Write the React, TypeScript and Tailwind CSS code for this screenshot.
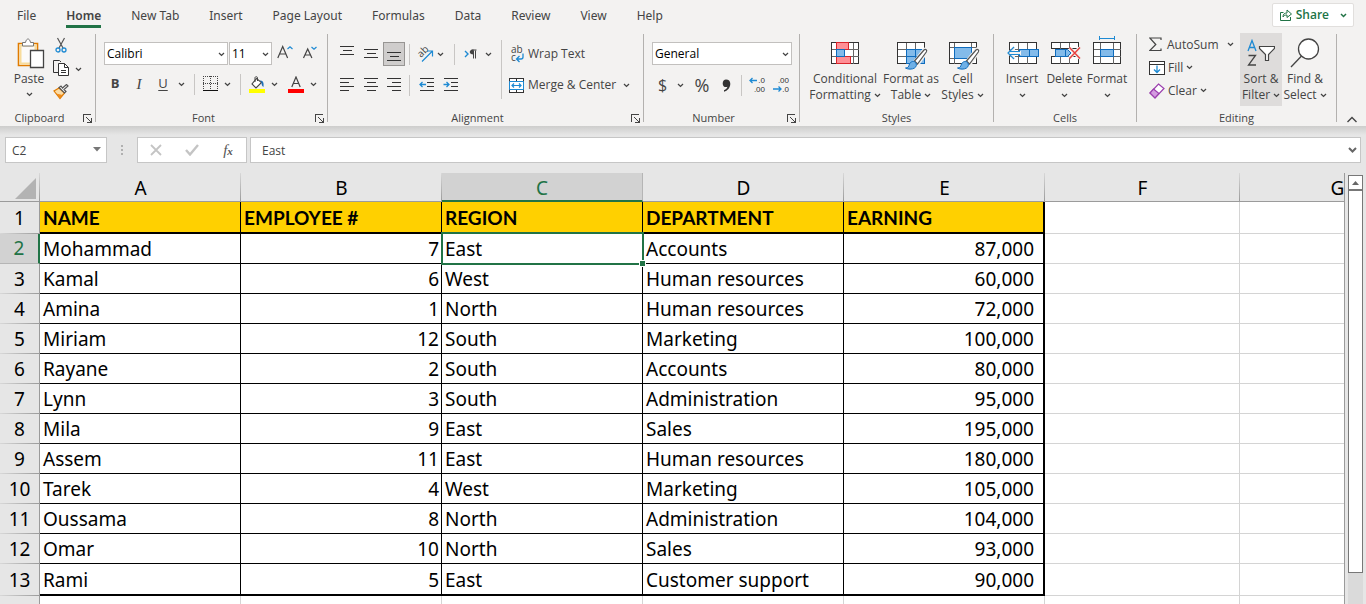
import React from "react";

const tabs = ["File", "Home", "New Tab", "Insert", "Page Layout", "Formulas", "Data", "Review", "View", "Help"];

type Row = [string, number, string, string, string];

const employees: Row[] = [
  ["Mohammad", 7, "East", "Accounts", "87,000"],
  ["Kamal", 6, "West", "Human resources", "60,000"],
  ["Amina", 1, "North", "Human resources", "72,000"],
  ["Miriam", 12, "South", "Marketing", "100,000"],
  ["Rayane", 2, "South", "Accounts", "80,000"],
  ["Lynn", 3, "South", "Administration", "95,000"],
  ["Mila", 9, "East", "Sales", "195,000"],
  ["Assem", 11, "East", "Human resources", "180,000"],
  ["Tarek", 4, "West", "Marketing", "105,000"],
  ["Oussama", 8, "North", "Administration", "104,000"],
  ["Omar", 10, "North", "Sales", "93,000"],
  ["Rami", 5, "East", "Customer support", "90,000"],
];

function Caret({ className = "" }: { className?: string }) {
  return (
    <svg width="7" height="5" viewBox="0 0 7 5" className={`shrink-0 ${className}`} fill="none" stroke="#444" strokeWidth="1.3" aria-hidden="true">
      <path d="M1 1l2.5 2.4L6 1" />
    </svg>
  );
}

function CaretButton({ label, className }: { label: string; className: string }) {
  return (
    <button type="button" aria-label={label} className={`flex h-6 shrink-0 items-center justify-center ${className}`}>
      <Caret />
    </button>
  );
}

function Tool({ label, className = "w-6", children }: { label: string; className?: string; children: React.ReactNode }) {
  return (
    <button type="button" aria-label={label} className={`flex h-6 shrink-0 items-center justify-center ${className}`}>
      {children}
    </button>
  );
}

function Divider({ className = "w-3" }: { className?: string }) {
  return (
    <div className={`flex h-[21px] shrink-0 justify-center ${className}`}>
      <div className="w-px bg-[#c8c6c4]" />
    </div>
  );
}

function Launcher({ label }: { label: string }) {
  return (
    <button type="button" aria-label={label} className="flex w-4 items-center justify-end pr-[3px]">
      <svg width="9" height="9" viewBox="0 0 9 9" fill="none" stroke="#444" shapeRendering="crispEdges">
        <path d="M.5 8V.5H8M8.500 4v4.500H4" />
        <path d="M3 3l5 5" shapeRendering="auto" />
      </svg>
    </button>
  );
}

function Group({ title, launcher, className, children }: { title: string; launcher?: boolean; className: string; children: React.ReactNode }) {
  return (
    <>
      <section aria-label={title} className={`flex shrink-0 flex-col ${className}`}>
        <div className="flex h-[79px]">{children}</div>
        <div className="flex h-4">
          <div className="flex-1 text-center text-[11px] leading-4">{title}</div>
          {launcher && <Launcher label={`${title} settings`} />}
        </div>
      </section>
      <div className="mt-[3px] h-[88px] w-px shrink-0 bg-[#b3b1af]" />
    </>
  );
}

function BigButton({ icon, line1, line2, className }: { icon: React.ReactNode; line1: string; line2?: string; className: string }) {
  return (
    <button type="button" className={`flex shrink-0 flex-col items-center leading-4 ${className}`}>
      <span className="flex h-[37px] items-center justify-center">{icon}</span>
      <span className="whitespace-nowrap">{line1}</span>
      <span className="flex h-4 items-center gap-[3px] whitespace-nowrap">
        {line2}
        <Caret />
      </span>
    </button>
  );
}

function Lines({ rows }: { rows: [number, number, number][] }) {
  return (
    <svg width="14" height="17" viewBox="0 0 14 17" fill="#333" shapeRendering="crispEdges" aria-hidden="true">
      {rows.map(([x, y, w]) => (
        <rect key={y} x={x} y={y} width={w} height="1" />
      ))}
    </svg>
  );
}

function Brush() {
  return (
    <>
      <path d="M18 19.500L27 8c1.500-1.500 3.500 0 2.300 2L21 22z" fill="#fff" stroke="#f3f2f1" strokeWidth="3.500" />
      <path d="M17.500 19L27 8c1.500-1.500 3.500 0 2.300 2L20.500 22z" fill="#fff" stroke="#555" strokeWidth="1.200" />
      <path d="M8.500 26c3 0 3-1.500 4-4s4.500-3.500 6-1.500 1.200 4-1 5.500-6.500 1.500-9 0z" fill="#6fb0e6" stroke="#0f6cbd" />
    </>
  );
}

function Ribbon() {
  return (
    <div className="flex h-[95px] overflow-hidden text-[12px] text-[#444]">
      <Group title="Clipboard" launcher className="w-[95px]">
        <button type="button" className="ml-2 flex w-[42px] flex-col items-center pt-[7px] leading-4">
          <svg width="28" height="31" viewBox="0 0 28 31" fill="none" className="ml-1">
            <path d="M1.500 5.500h19v22h-19z" fill="#fbfaf9" stroke="#e07b00" strokeWidth="1.600" />
            <path d="M3.500 7.500h15v18h-15z" stroke="#f8dc9c" strokeWidth="2" />
            <path d="M5.500 8V4.500h3C9 2 10 1 11 1s2 1 2.500 3.500h3V8z" fill="#fff" stroke="#777" />
            <path d="M13.500 12.500h13v17h-13z" fill="#fff" stroke="#444" strokeWidth="1.300" />
          </svg>
          <span className="mt-[2px]">Paste</span>
          <Caret className="mt-[5px]" />
        </button>
        <div className="flex flex-col pt-[6px]">
          <button type="button" aria-label="Cut" className="flex h-[23px] w-[22px] justify-center">
            <svg width="12" height="17" viewBox="0 0 12 17" fill="none">
              <path d="M2.500 1l5.500 10M9.500 1L4 11" stroke="#555" strokeWidth="1.200" />
              <circle cx="3" cy="13" r="2" stroke="#1e8ad3" strokeWidth="1.300" />
              <circle cx="9" cy="13" r="2" stroke="#1e8ad3" strokeWidth="1.300" />
            </svg>
          </button>
          <div className="flex">
            <button type="button" aria-label="Copy" className="flex h-6 w-[22px] justify-center">
              <svg width="16" height="17" viewBox="0 0 16 17" fill="none" stroke="#333">
                <path d="M5 12.500H.5V.5h6L8 2" />
                <path d="M5.500 3.500h6l4 4v8h-10z" fill="#fff" />
                <path d="M11.500 3.500v4h4M8 10.500h5M8 12.500h5" />
              </svg>
            </button>
            <button type="button" aria-label="Copy options" className="flex h-[18px] w-3 items-center justify-center">
              <Caret />
            </button>
          </div>
          <button type="button" aria-label="Format Painter" className="flex h-6 w-[22px] justify-center">
            <svg width="16" height="16" viewBox="0 0 16 16" fill="none">
              <path d="M6 4L1 7l6 7.500L11.500 9z" fill="#fbdca6" stroke="#e07b00" strokeWidth="1.200" />
              <path d="M3 9.500l4 4.500 2.500-3z" fill="#ee8b1d" />
              <path d="M6 3.500l5.500 5.500 1.500-1.500-2-2 4-3.500-1.500-1.500L9.500 4 8 2z" fill="#fff" stroke="#555" strokeWidth="1.200" />
            </svg>
          </button>
        </div>
      </Group>

      <Group title="Font" launcher className="w-[231px]">
        <div className="flex flex-col pl-2 pt-[11px]">
          <div className="flex h-[23px] items-center">
            <label className="relative flex">
              <select aria-label="Font name" className="h-[23px] w-[124px] appearance-none border border-[#c2c0be] bg-white pl-[2px] text-[12px] text-black" defaultValue="Calibri">
                <option>Calibri</option>
              </select>
              <Caret className="pointer-events-none absolute right-[3px] top-[10px]" />
            </label>
            <label className="relative ml-px flex">
              <select aria-label="Font size" className="h-[23px] w-[43px] appearance-none border border-[#c2c0be] bg-white pl-[2px] text-[12px] text-black" defaultValue="11">
                <option>11</option>
              </select>
              <Caret className="pointer-events-none absolute right-[3px] top-[10px]" />
            </label>
            <Tool label="Increase font size" className="ml-px w-6">
              <svg width="16" height="17" viewBox="0 0 16 17" fill="none">
                <path d="M.8 13L5.700 1.500 10.600 13M2.500 9h6.400" stroke="#444" strokeWidth="1.200" />
                <path d="M10.500 4L13 1.700 15.500 4" stroke="#1e8ad3" strokeWidth="1.200" />
              </svg>
            </Tool>
            <Tool label="Decrease font size">
              <svg width="15" height="17" viewBox="0 0 15 17" fill="none">
                <path d="M1.500 13L5.700 4 9.900 13M3 10h5.400" stroke="#444" strokeWidth="1.200" />
                <path d="M9.500 2L12 4.300 14.500 2" stroke="#1e8ad3" strokeWidth="1.200" />
              </svg>
            </Tool>
          </div>
          <div className="mt-[7px] flex h-6 items-center">
            <Tool label="Bold" className="w-[22px]"><span className="text-[13px] font-bold">B</span></Tool>
            <Tool label="Italic" className="w-[26px]"><span className="font-[Liberation_Serif,serif] text-[15px] italic">I</span></Tool>
            <Tool label="Underline" className="w-[22px]"><span className="text-[13px] underline underline-offset-2">U</span></Tool>
            <CaretButton label="Underline options" className="w-[14px]" />
            <Divider />
            <Tool label="Borders" className="w-5">
              <svg width="15" height="16" viewBox="0 0 15 16" fill="none" shapeRendering="crispEdges">
                <path d="M0 .5h15M0 7.500h15M.5 0v14M7.500 0v14M14.500 0v14" stroke="#444" strokeDasharray="1 1" />
                <path d="M0 14.500h15" stroke="#111" strokeWidth="1.500" />
              </svg>
            </Tool>
            <CaretButton label="Border options" className="w-[14px]" />
            <Divider />
            <Tool label="Fill color" className="w-[22px]">
              <svg width="17" height="17" viewBox="0 0 17 17" fill="none">
                <path d="M7.500 2.500L3 8l4 4 5.500-5.500z" fill="#fff" stroke="#444" strokeWidth="1.100" />
                <path d="M6 6V1.500c0-1 2.500-1 2.500 0V5" stroke="#444" />
                <path d="M11 4.500c3 0 4 2 3.500 6.500-1.500-1-2-2.500-2-4.500z" fill="#1e6fb8" />
                <path d="M0 13h16v4H0z" fill="#ffff00" />
              </svg>
            </Tool>
            <CaretButton label="Fill color options" className="w-3" />
            <Tool label="Font color" className="ml-[5px] w-[22px]">
              <svg width="16" height="17" viewBox="0 0 16 17" fill="none">
                <path d="M3.800 11L8 1l4.200 10M5.200 7.500h5.600" stroke="#444" strokeWidth="1.200" />
                <path d="M0 13h16v4H0z" fill="#ff0000" />
              </svg>
            </Tool>
            <CaretButton label="Font color options" className="w-3" />
          </div>
        </div>
      </Group>

      <Group title="Alignment" launcher className="w-[315px]">
        <div className="flex w-[173px] flex-col pl-[7px] pt-[11px]">
          <div className="flex h-6 items-center">
            <Tool label="Top align"><Lines rows={[[0, 0, 14], [3, 4, 9], [0, 8, 14]]} /></Tool>
            <Tool label="Middle align"><Lines rows={[[0, 3, 14], [3, 7, 9], [0, 11, 14]]} /></Tool>
            <Tool label="Bottom align" className="w-[22px] border border-[#979593] bg-[#cfcdcc]"><Lines rows={[[0, 6, 14], [3, 10, 9], [0, 14, 14]]} /></Tool>
            <Divider className="w-[9px]" />
            <Tool label="Orientation" className="w-[22px]">
              <svg width="18" height="17" viewBox="0 0 18 17" fill="none" className="overflow-visible">
                <text x="0" y="0" transform="translate(5 12) rotate(-45)" fontSize="10" fill="#444">ab</text>
                <path d="M6 15.500L16 5.500M11 5h5.500v5.500" stroke="#1e8ad3" strokeWidth="1.200" />
              </svg>
            </Tool>
            <CaretButton label="Orientation options" className="w-[9px]" />
            <Divider className="w-[18px]" />
            <Tool label="Text direction" className="w-[14px]">
              <svg width="13" height="12" viewBox="0 0 13 12" fill="none">
                <path d="M1 3l3 3-3 3" stroke="#1e8ad3" strokeWidth="1.400" />
                <path d="M9.500 2.500v8M11.500 2.500v8M7.500 2h5" stroke="#444" />
                <path d="M9.500 1.500v5C4.500 6.500 4.500 1.500 9.500 1.500z" fill="#444" />
              </svg>
            </Tool>
            <CaretButton label="Text direction options" className="w-[22px]" />
          </div>
          <div className="mt-[7px] flex h-6 items-center">
            <Tool label="Align left"><Lines rows={[[0, 1, 14], [0, 5, 9], [0, 9, 14], [0, 13, 9]]} /></Tool>
            <Tool label="Center"><Lines rows={[[0, 1, 14], [3, 5, 9], [0, 9, 14], [3, 13, 9]]} /></Tool>
            <Tool label="Align right" className="w-[22px]"><Lines rows={[[0, 1, 14], [5, 5, 9], [0, 9, 14], [5, 13, 9]]} /></Tool>
            <Divider className="w-[9px]" />
            <Tool label="Decrease indent">
              <svg width="15" height="14" viewBox="0 0 15 14" fill="none">
                <path d="M1 .5h14M8 4.500h7M8 8.500h7M1 12.500h14" stroke="#333" shapeRendering="crispEdges" />
                <path d="M7 6.500H1M3.500 4L1 6.500 3.500 9" stroke="#1e8ad3" strokeWidth="1.300" />
              </svg>
            </Tool>
            <Tool label="Increase indent">
              <svg width="15" height="14" viewBox="0 0 15 14" fill="none">
                <path d="M1 .5h14M8 4.500h7M8 8.500h7M1 12.500h14" stroke="#333" shapeRendering="crispEdges" />
                <path d="M.5 6.500h5.500M3.500 4L6 6.500 3.500 9" stroke="#1e8ad3" strokeWidth="1.300" />
              </svg>
            </Tool>
          </div>
        </div>
        <div className="mt-[9px] h-[59px] w-px bg-[#c8c6c4]" />
        <div className="flex flex-col pl-[7px] pt-[11px]">
          <button type="button" className="flex h-6 items-center gap-1">
            <svg width="15" height="18" viewBox="0 0 15 18" fill="none" className="overflow-visible">
              <text fontSize="10" fill="#444" aria-hidden="true">
                <tspan x="2" y="8">ab</tspan>
                <tspan x="2" y="16">c</tspan>
              </text>
              <path d="M14 8.500v3.500c0 1.500-1 2-2 2H8M10.500 11l-3 3 3 3" stroke="#1e8ad3" strokeWidth="1.300" />
            </svg>
            Wrap Text
          </button>
          <div className="mt-[7px] flex h-6 items-center">
            <button type="button" className="flex w-[106px] items-center gap-1 whitespace-nowrap">
              <svg width="15" height="15" viewBox="0 0 15 15" fill="none" className="shrink-0">
                <path d="M.5 .5h14v14H.5zM7.500 .5v3M7.500 11.500v3" fill="#fff" stroke="#333" shapeRendering="crispEdges" />
                <path d="M.5 3.500h14v8H.5z" fill="#fff" stroke="#1e8ad3" />
                <path d="M3 7.500h9M5 5.500l-2 2 2 2M10 5.500l2 2-2 2" stroke="#1e8ad3" strokeWidth="1.200" />
              </svg>
              Merge &amp; Center
            </button>
            <CaretButton label="Merge options" className="w-[22px]" />
          </div>
        </div>
      </Group>

      <Group title="Number" launcher className="w-[155px]">
        <div className="flex flex-col pl-2 pt-[11px]">
          <label className="relative flex">
            <select aria-label="Number format" className="h-[23px] w-[140px] appearance-none border border-[#c2c0be] bg-white pl-[2px] text-[12px] text-black" defaultValue="General">
              <option>General</option>
            </select>
            <Caret className="pointer-events-none absolute right-[3px] top-[10px]" />
          </label>
          <div className="mt-2 flex h-6 items-center">
            <Tool label="Accounting format" className="w-[21px]"><span className="text-[16px]">$</span></Tool>
            <CaretButton label="Accounting options" className="w-[14px]" />
            <Tool label="Percent style" className="w-[30px]"><span className="text-[18px]">%</span></Tool>
            <Tool label="Comma style" className="w-[18px]">
              <svg width="9" height="13" viewBox="0 0 9 13" fill="#333">
                <path d="M4 .5c2.700 0 4.300 1.500 4.300 4.200 0 4-2.800 7-6.300 8v-1.400c2-.8 3.200-2 3.400-3.500-.4.2-.9.300-1.400.3C2 8.100.7 6.500.7 4.400.7 2 2.200.5 4 .5z" />
              </svg>
            </Tool>
            <Divider />
            <Tool label="Increase decimal" className="w-5">
              <svg width="17" height="18" viewBox="0 0 17 18" fill="none" className="overflow-visible">
                <text fontSize="8" textAnchor="end" fill="#333" className="font-[Liberation_Sans,sans-serif]" aria-hidden="true">
                  <tspan x="16" y="7">.0</tspan>
                  <tspan x="16" y="16">.00</tspan>
                </text>
                <path d="M8 4.500H1M3.500 2L1 4.500 3.500 7" stroke="#1e8ad3" strokeWidth="1.300" />
              </svg>
            </Tool>
            <Tool label="Decrease decimal" className="ml-1 w-5">
              <svg width="17" height="18" viewBox="0 0 17 18" fill="none" className="overflow-visible">
                <text fontSize="8" textAnchor="end" fill="#333" className="font-[Liberation_Sans,sans-serif]" aria-hidden="true">
                  <tspan x="16" y="7">.00</tspan>
                  <tspan x="16" y="16">.0</tspan>
                </text>
                <path d="M0 13h8M5.500 10.500L8 13 5.500 15.500" stroke="#1e8ad3" strokeWidth="1.300" />
              </svg>
            </Tool>
          </div>
        </div>
      </Group>

      <Group title="Styles" className="w-[193px]">
        <BigButton
          className="ml-2 w-[74px] pt-[3px]"
          line1="Conditional"
          line2="Formatting"
          icon={
            <svg width="28" height="22" viewBox="0 0 28 22" fill="none" shapeRendering="crispEdges">
              <path d="M.5 .5h27v21H.5z" fill="#fff" stroke="#333" />
              <path d="M.5 7.500h27M.5 14.500h27M5.500 .5v21M22.500 .5v21" stroke="#666" />
              <path d="M14 8h8v6h-8z" fill="#fff" />
              <path d="M5.500 .5h12v7h-12zM5.500 14.500h14v7h-14z" fill="#ff8f95" stroke="#d8252b" />
              <path d="M5.500 7.500h8v7h-8z" fill="#83bbea" stroke="#0f6cbd" />
            </svg>
          }
        />
        <BigButton
          className="w-[58px] pt-[3px]"
          line1="Format as"
          line2="Table"
          icon={
            <svg width="31" height="29" viewBox="0 0 31 29" fill="none" className="mt-[7px] ml-[3px]">
              <g shapeRendering="crispEdges">
                <path d="M.5 .5h27v21H.5z" fill="#fff" stroke="#333" />
                <path d="M9.500 7.500h18v14h-18z" fill="#83bbea" />
                <path d="M.5 7.500h9M.5 14.500h9M9.500 .5v7M18.500 .5v7" stroke="#666" />
                <path d="M9.500 7.500h18v14h-18zM9.500 14.500h18M18.500 7.500v14" stroke="#0f6cbd" />
              </g>
              <Brush />
            </svg>
          }
        />
        <BigButton
          className="w-[45px] pt-[3px]"
          line1="Cell"
          line2="Styles"
          icon={
            <svg width="31" height="29" viewBox="0 0 31 29" fill="none" className="mt-[7px] ml-[3px]">
              <g shapeRendering="crispEdges">
                <path d="M.5 .5h27v21H.5z" fill="#fff" stroke="#333" />
                <path d="M.5 5.500h27M.5 16.500h27M5.500 .5v21M22.500 .5v21" stroke="#666" />
                <path d="M5.500 5.500h17v11h-17z" fill="#83bbea" stroke="#0f6cbd" />
              </g>
              <Brush />
            </svg>
          }
        />
      </Group>

      <Group title="Cells" className="w-[142px]">
        <BigButton
          className="ml-[7px] w-[42px] pt-[3px]"
          line1="Insert"
          icon={
            <svg width="32" height="22" viewBox="0 0 32 22" fill="none" className="ml-[2px]">
              <g shapeRendering="crispEdges">
                <path d="M2.500 .5h27v21h-27z" fill="#fff" stroke="#333" />
                <path d="M11.500 .5v21M20.500 .5v21M2.500 7.500h27M2.500 14.500h27" stroke="#666" />
                <path d="M12.500 7.500h19v7h-19z" fill="#83bbea" stroke="#0f6cbd" />
                <path d="M22.500 7.500v7" stroke="#0f6cbd" />
              </g>
              <path d="M0 11l6-6h2v4h6v4H8v4H6z" fill="#f3f2f1" />
              <path d="M7 5l-6 6 6 6M2 9.500h11M2 12.500h11" stroke="#1e8ad3" strokeWidth="1.200" />
            </svg>
          }
        />
        <BigButton
          className="w-[43px] pt-[3px]"
          line1="Delete"
          icon={
            <svg width="30" height="22" viewBox="0 0 30 22" fill="none" className="ml-[2px]">
              <g shapeRendering="crispEdges">
                <path d="M.5 .5h27v6H.5zM.5 14.500h27v7H.5z" fill="#fff" stroke="#333" />
                <path d="M9.500 .5v6M18.500 .5v6M9.500 14.500v7M18.500 14.500v7" stroke="#666" />
                <path d="M4.500 7.500h10v7h-10z" fill="#83bbea" stroke="#0f6cbd" />
              </g>
              <path d="M14.500 7.500h2l3.500 3.500-3.500 3.500h-2z" fill="#83bbea" stroke="#0f6cbd" />
              <path d="M18.500 6l10 10M28.500 6l-10 10" stroke="#f3f2f1" strokeWidth="3.500" />
              <path d="M18.500 5.500l10.500 11M29 5.500l-10.500 11" stroke="#e8413f" strokeWidth="1.500" />
            </svg>
          }
        />
        <BigButton
          className="w-[42px] pt-[3px]"
          line1="Format"
          icon={
            <svg width="28" height="28" viewBox="0 0 28 28" fill="none" shapeRendering="crispEdges" className="mb-[6px]">
              <path d="M6.500 0v4M21.500 0v4M6.500 2h15" stroke="#1e8ad3" />
              <path d="M.5 6.500h27v21H.5z" fill="#fff" stroke="#333" />
              <path d="M.5 13.500h27M.5 20.500h27M7.500 6.500v21M20.500 6.500v21" stroke="#666" />
              <path d="M7.500 13.500h13v7h-13z" fill="#83bbea" stroke="#0f6cbd" />
            </svg>
          }
        />
      </Group>

      <Group title="Editing" className="w-[199px]">
        <div className="flex w-[103px] flex-col pl-3 pt-[2px]">
          <div className="flex h-[23px] items-center">
            <button type="button" className="flex w-[74px] items-center gap-1">
              <svg width="14" height="15" viewBox="0 0 14 15" fill="none" stroke="#444" strokeWidth="1.200" className="shrink-0">
                <path d="M12 3V1H.8l6 6.500-6 6H12v-2" />
              </svg>
              AutoSum
            </button>
            <CaretButton label="AutoSum options" className="w-[14px]" />
          </div>
          <button type="button" className="flex h-[23px] items-center gap-[3px]">
            <svg width="16" height="14" viewBox="0 0 16 14" fill="none">
              <path d="M.5 .5h15v13H.5z" fill="#fff" stroke="#333" shapeRendering="crispEdges" />
              <path d="M1 3.500h14" stroke="#333" shapeRendering="crispEdges" />
              <path d="M8 4.500v7M5 8.500l3 3 3-3" stroke="#1e8ad3" strokeWidth="1.300" />
            </svg>
            <span>Fill</span>
            <Caret />
          </button>
          <button type="button" className="flex h-[23px] items-center gap-[3px]">
            <svg width="16" height="16" viewBox="0 0 16 16" fill="none" stroke="#9b3fae" strokeWidth="1.200">
              <path d="M9.500 1L15 5.500 6 15 1 10z" fill="#fff" />
              <path d="M4.500 6L10 10.500 6 15 1 10z" fill="#d49be0" />
            </svg>
            <span>Clear</span>
            <Caret />
          </button>
        </div>
        <BigButton
          className="mt-[2px] h-[73px] w-[42px] bg-[#dedcdb] pt-px"
          line1="Sort &amp;"
          line2="Filter"
          icon={
            <svg width="28" height="28" viewBox="0 0 28 28" fill="none">
              <path d="M1 12L5 1.500 9 12M2.500 8.500h5" stroke="#1e8ad3" strokeWidth="1.300" />
              <path d="M1.500 16.500h7l-7 9.500h7.500" stroke="#444" strokeWidth="1.300" />
              <path d="M12.500 7.500h15v2l-6 6v6l-3 0v-6l-6-6z" fill="#fff" stroke="#444" strokeWidth="1.200" />
            </svg>
          }
        />
        <BigButton
          className="w-[46px] pt-[3px]"
          line1="Find &amp;"
          line2="Select"
          icon={
            <svg width="30" height="30" viewBox="0 0 30 30" fill="none" stroke="#444" strokeWidth="1.300">
              <circle cx="18.500" cy="11" r="10" fill="#fff" />
              <path d="M11.500 18L1 29" />
            </svg>
          }
        />
      </Group>

      <button type="button" aria-label="Collapse the ribbon" className="ml-auto mr-2 flex items-end pb-[3px]">
        <svg width="12" height="7" viewBox="0 0 12 7" fill="none" stroke="#444" strokeWidth="1.400">
          <path d="M1.500 6L6 1.500 10.500 6" />
        </svg>
      </button>
    </div>
  );
}

function FormulaBar() {
  return (
    <div className="flex h-[47px] items-start bg-[#e6e6e6] bg-[linear-gradient(#cdcdcc,#e6e6e6)] bg-[length:100%_9px] bg-no-repeat pl-[5px] pr-[5px] pt-[11px] text-[12px] text-[#444]">
      <label className="relative flex">
        <input aria-label="Name box" defaultValue="C2" className="h-[26px] w-[102px] border border-[#c6c6c6] bg-white pl-[6px]" />
        <svg width="8" height="5" viewBox="0 0 8 5" className="pointer-events-none absolute right-[6px] top-[10px]" fill="#777">
          <path d="M0 0h8L4 4.500z" />
        </svg>
      </label>
      <div className="flex h-[26px] w-[30px] flex-col items-center justify-center gap-[2px]">
        <span className="size-[2px] bg-[#b0b0b0]" />
        <span className="size-[2px] bg-[#b0b0b0]" />
        <span className="size-[2px] bg-[#b0b0b0]" />
      </div>
      <div className="flex h-[26px] w-[110px] items-center border border-[#c6c6c6] bg-white">
        <button type="button" aria-label="Cancel" className="flex w-9 justify-center">
          <svg width="12" height="12" viewBox="0 0 12 12" fill="none" stroke="#c4c4c4" strokeWidth="1.800"><path d="M1 1l10 10M11 1L1 11" /></svg>
        </button>
        <button type="button" aria-label="Enter" className="flex w-9 justify-center">
          <svg width="14" height="12" viewBox="0 0 14 12" fill="none" stroke="#c4c4c4" strokeWidth="2.400"><path d="M1 6l4 4.500L13 1" /></svg>
        </button>
        <button type="button" aria-label="Insert function" className="flex w-9 items-baseline justify-center font-[Liberation_Serif,serif] text-[15px] italic leading-5 text-[#555]">
          f<span className="text-[11px] font-bold">x</span>
        </button>
      </div>
      <label className="relative ml-[3px] flex flex-1">
        <input aria-label="Formula" defaultValue="East" className="h-[26px] w-full border border-[#c6c6c6] bg-white pl-[11px]" />
        <svg width="9" height="7" viewBox="0 0 9 7" className="pointer-events-none absolute right-[4px] top-[10px]" fill="none" stroke="#666" strokeWidth="2">
          <path d="M1 1l3.500 3.500L8 1" />
        </svg>
      </label>
    </div>
  );
}

const colHead =
  "h-[29px] border-b border-[#9b9b9b] bg-[#e6e6e6] bg-[linear-gradient(#d8d8d8,#9b9b9b)] bg-[length:1px_100%] bg-right bg-no-repeat p-0 pt-[3px] font-normal leading-none";
const rowHead =
  "border-r border-[#9b9b9b] bg-[#e6e6e6] bg-[linear-gradient(90deg,#d8d8d8,#9b9b9b)] bg-[length:100%_1px] bg-bottom bg-no-repeat p-0 font-normal leading-none";
const blank = "border-b border-r border-[#d4d4d4] p-0";

function Sheet() {
  const last = employees.length - 1;
  return (
    <table className="w-full min-w-[1435px] table-fixed border-separate border-spacing-0 bg-white font-[Noto_Sans,sans-serif] text-[19px] text-black">
      <colgroup>
        <col className="w-10" />
        <col className="w-[201px]" />
        <col className="w-[201px]" />
        <col className="w-[201px]" />
        <col className="w-[201px]" />
        <col className="w-[201px]" />
        <col className="w-[195px]" />
        <col />
      </colgroup>
      <thead>
        <tr>
          <th aria-label="Select all" className={colHead}>
            <svg width="21" height="21" viewBox="0 0 21 21" className="ml-auto mr-1" fill="#b3b3b3"><path d="M21 0v21H0z" /></svg>
          </th>
          {["A", "B", "C", "D", "E", "F", "G"].map((c) => (
            <th key={c} scope="col" className={c === "C" ? "h-[29px] border-b-2 border-r border-b-[#217346] border-r-[#b5b5b5] bg-[#d2d2d2] p-0 pt-1 font-normal leading-none text-[#217346]" : colHead}>
              {c}
            </th>
          ))}
        </tr>
      </thead>
      <tbody>
        <tr className="h-8">
          <th scope="row" className={rowHead}>1</th>
          {["NAME", "EMPLOYEE #", "REGION", "DEPARTMENT", "EARNING"].map((h, i) => (
            <td key={h} className={`border-b-2 border-black bg-[#ffd000] p-0 pl-[3px] pt-px font-[Lato,sans-serif] text-[19px] font-bold leading-none ${i === 4 ? "border-r-2" : "border-r"}`}>
              {h}
            </td>
          ))}
          <td className={blank} />
          <td className={blank} />
        </tr>
        {employees.map((row, r) => (
          <tr key={row[0]} className={r === last ? "h-8" : "h-[30px]"}>
            <th scope="row" className={r === 0 ? "border-b border-r-2 border-b-[#b5b5b5] border-r-[#217346] bg-[#d2d2d2] p-0 font-normal leading-none text-[#217346]" : rowHead}>
              {r + 2}
            </th>
            {row.map((value, c) => (
              <td
                key={c}
                className={`border-black p-0 pt-[2px] leading-none ${r === last ? "border-b-2" : "border-b"} ${c === 4 ? "border-r-2 pr-[9px] text-right" : "border-r"} ${c === 1 ? "pr-[2px] text-right" : "pl-[3px]"} ${r === 0 && c === 2 ? "relative" : ""}`}
              >
                {value}
                {r === 0 && c === 2 && (
                  <span className="pointer-events-none absolute -bottom-[2px] -left-px -right-[2px] -top-[2px] border-2 border-[#217346]">
                    <span className="absolute -bottom-1 -right-1 size-[7px] border border-white bg-[#217346]" />
                  </span>
                )}
              </td>
            ))}
            <td className={blank} />
            <td className={blank} />
          </tr>
        ))}
        <tr className="h-[30px]">
          <th scope="row" aria-label="14" className={rowHead} />
          {[0, 1, 2, 3, 4, 5, 6].map((c) => (
            <td key={c} className={blank} />
          ))}
        </tr>
      </tbody>
    </table>
  );
}

export default function App() {
  return (
    <div className="flex h-screen flex-col overflow-hidden bg-[#e6e6e6] font-[Open_Sans,sans-serif]">
      <header className="shrink-0 bg-[#f3f2f1]">
        <div className="flex h-[31px] items-start pl-[17px] pr-3 pt-[3px]">
          <nav className="flex gap-[30px] font-[Noto_Sans,sans-serif] text-[12px] text-[#444]">
            {tabs.map((t) => (
              <button key={t} type="button" className={`h-[25px] whitespace-nowrap border-b-[3px] pt-[3px] ${t === "Home" ? "border-[#217346] font-semibold" : "border-transparent"}`}>
                {t}
              </button>
            ))}
          </nav>
          <div className="ml-auto flex h-6 items-center rounded-[2px] border border-[#e1dfdd] bg-white text-[12px] font-semibold text-[#217346]">
            <button type="button" className="flex items-center gap-1 pl-[7px]">
              <svg width="12" height="12" viewBox="0 0 12 12" fill="none" stroke="#217346">
                <path d="M3.500 3.500h-3v8h10V8" />
                <path d="M3 8c0-3 1.500-4 4-4V1l4.500 4L7 8.500V6C5 6 4 6.500 3 8z" />
              </svg>
              Share
            </button>
            <button type="button" aria-label="Share options" className="flex w-6 items-center justify-center pl-1">
              <svg width="7" height="5" viewBox="0 0 7 5" fill="none" stroke="#217346" strokeWidth="1.500"><path d="M1 1l2.500 2.500L6 1" /></svg>
            </button>
          </div>
        </div>
        <Ribbon />
      </header>
      <FormulaBar />
      <main className="flex min-h-0 flex-1">
        <div className="min-w-0 flex-1 overflow-hidden"><Sheet /></div>
        <div className="flex w-[22px] shrink-0 flex-col">
          <div className="flex flex-1 border-l border-[#9b9b9b] pl-[3px] pt-[2px]">
            <div className="flex w-[15px] flex-col bg-[#dadada]">
              <button type="button" aria-label="Scroll up" className="flex h-[15px] items-center justify-center border border-[#777] bg-white">
                <svg width="7" height="4" viewBox="0 0 7 4" fill="#666"><path d="M3.500 0L7 4H0z" /></svg>
              </button>
              <div className="mb-[31px] flex-1 border border-[#777] bg-white" />
            </div>
          </div>
        </div>
      </main>
    </div>
  );
}
